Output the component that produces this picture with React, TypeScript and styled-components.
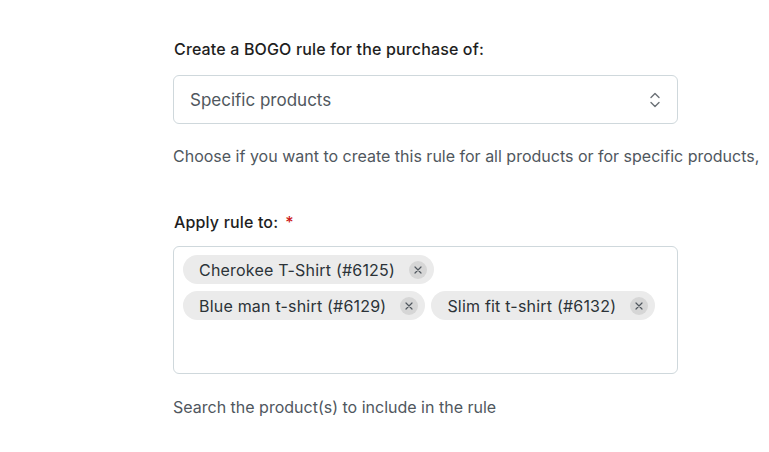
import styled, { createGlobalStyle } from "styled-components";

const GlobalStyle = createGlobalStyle`
  html, body {
    margin: 0;
    padding: 0;
    background: #ffffff;
  }
  body {
    font-family: Inter, "Liberation Sans", sans-serif;
    -webkit-font-smoothing: antialiased;
  }
`;

const Page = styled.div`
  width: 769px;
  height: 452px;
  padding: 38px 0 0 173px;
  box-sizing: border-box;
  overflow: hidden;
`;

const Field = styled.div<{ gap?: number }>`
  width: 505px;
  display: flex;
  flex-direction: column;
  margin-bottom: ${({ gap }) => gap ?? 0}px;
`;

const Label = styled.label<{ space: number }>`
  font-size: 16px;
  font-weight: 500;
  line-height: 22px;
  color: #1e1e1e;
  letter-spacing: 0.15px;
  margin: 0 0 ${({ space }) => space}px 1px;
`;

const Required = styled.span`
  color: #cc1818;
  margin-left: 7px;
`;

const SelectBox = styled.div`
  height: 49px;
  border: 1px solid #cfd8dc;
  border-radius: 6px;
  display: flex;
  align-items: center;
  justify-content: space-between;
  padding: 0 16px 0 16px;
  box-sizing: border-box;
  font-size: 17px;
  color: #50575e;
`;

const Help = styled.p<{ top?: number }>`
  margin: ${({ top }) => top ?? 0}px 0 0 0;
  font-size: 16px;
  line-height: 22px;
  color: #50575e;
  white-space: nowrap;
`;

const TagBox = styled.div`
  height: 128px;
  border: 1px solid #cfd8dc;
  border-radius: 6px;
  box-sizing: border-box;
  padding: 8px 9px;
  display: flex;
  flex-direction: column;
  gap: 7px;
`;

const TagRow = styled.div`
  display: flex;
  gap: 6px;
`;

const Chip = styled.span`
  height: 29px;
  border-radius: 15px;
  background: #ebebeb;
  display: inline-flex;
  align-items: center;
  padding: 0 7px 0 16px;
  gap: 14px;
  font-size: 16px;
  letter-spacing: 0.2px;
  color: #2c3338;
`;

const Remove = styled.button`
  width: 18px;
  height: 18px;
  border-radius: 50%;
  border: none;
  padding: 0;
  background: #d6d6d6;
  display: inline-flex;
  align-items: center;
  justify-content: center;
  color: #50575e;
`;

const CloseIcon = () => (
  <svg width="10" height="10" viewBox="0 0 10 10">
    <path d="M2 2 L8 8 M8 2 L2 8" stroke="currentColor" strokeWidth="1.2" strokeLinecap="round" />
  </svg>
);

const UpDownIcon = () => (
  <svg width="12" height="18" viewBox="0 0 12 18">
    <path
      d="M2 6.5 L6 2.5 L10 6.5 M2 11.5 L6 15.5 L10 11.5"
      fill="none"
      stroke="#6b7176"
      strokeWidth="1.4"
      strokeLinecap="round"
      strokeLinejoin="round"
    />
  </svg>
);

const tags = [
  ["Cherokee T-Shirt (#6125)"],
  ["Blue man t-shirt (#6129)", "Slim fit t-shirt (#6132)"],
];

export default function App() {
  return (
    <>
      <GlobalStyle />
      <Page>
        <Field gap={44}>
          <Label space={15}>Create a BOGO rule for the purchase of:</Label>
          <SelectBox>
            <span>Specific products</span>
            <UpDownIcon />
          </SelectBox>
          <Help top={21}>
            Choose if you want to create this rule for all products or for specific products,
          </Help>
        </Field>
        <Field>
          <Label space={13}>
            Apply rule to:<Required>*</Required>
          </Label>
          <TagBox>
            {tags.map((row, i) => (
              <TagRow key={i}>
                {row.map((t) => (
                  <Chip key={t}>
                    {t}
                    <Remove aria-label={`Remove ${t}`}>
                      <CloseIcon />
                    </Remove>
                  </Chip>
                ))}
              </TagRow>
            ))}
          </TagBox>
          <Help top={22}>Search the product(s) to include in the rule</Help>
        </Field>
      </Page>
    </>
  );
}
